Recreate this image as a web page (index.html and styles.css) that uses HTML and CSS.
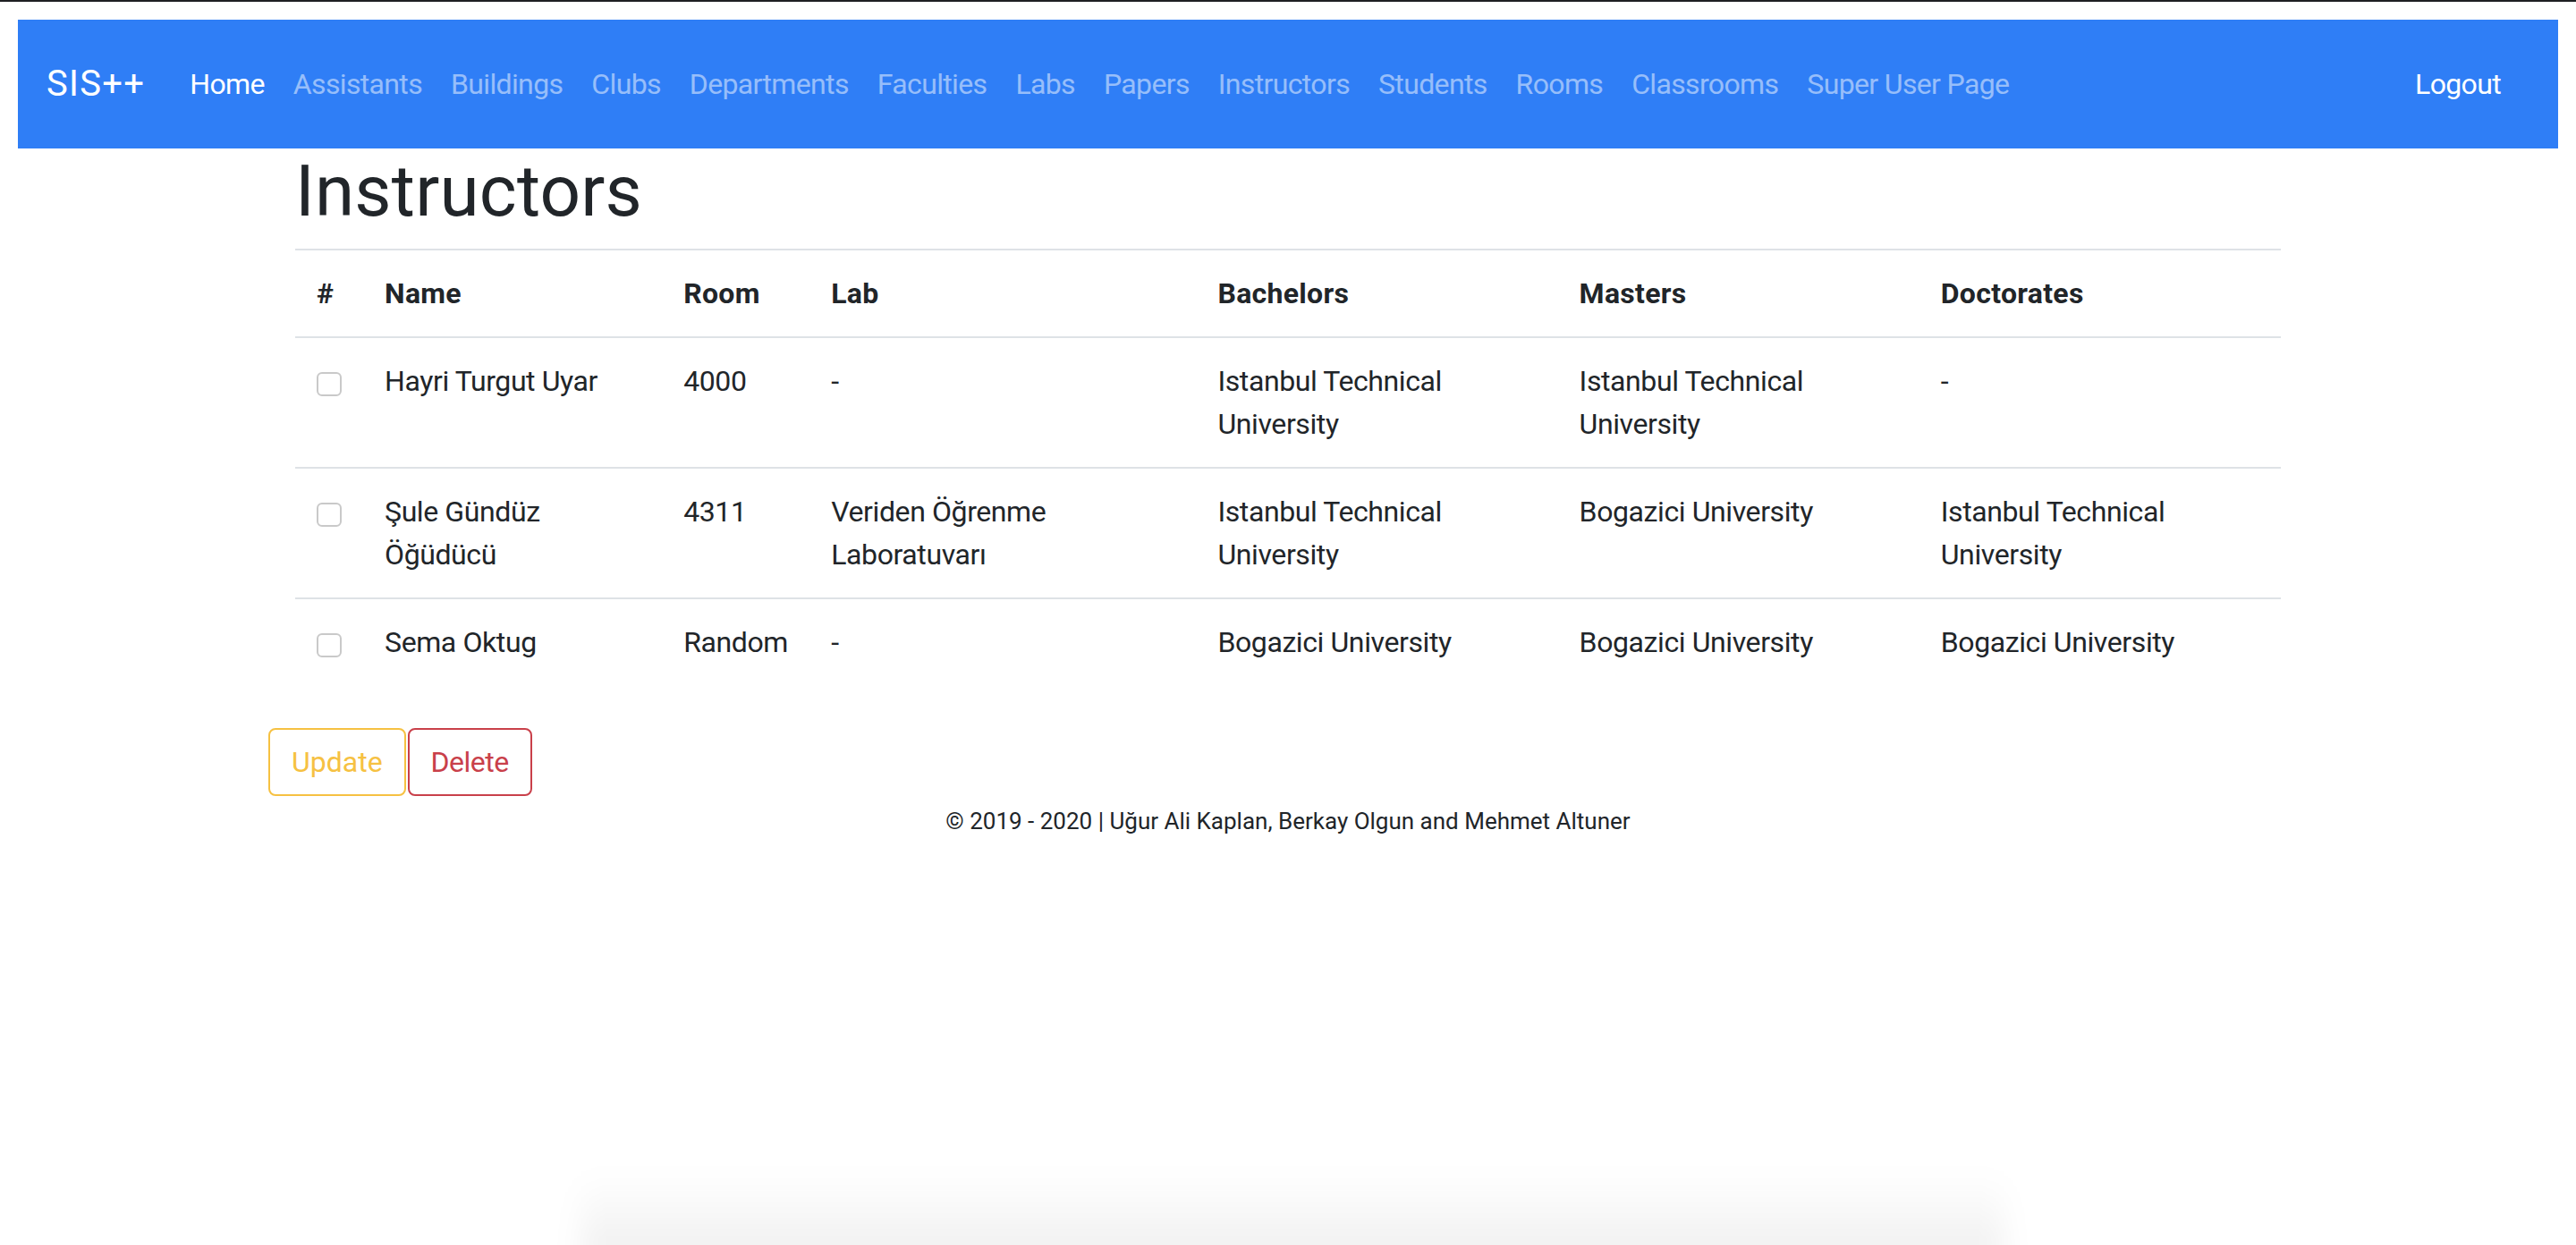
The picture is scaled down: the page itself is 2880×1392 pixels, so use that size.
FILE: index.html
```html
<!DOCTYPE html>
<html lang="en">
<head>
<meta charset="utf-8">
<title>Instructors - SIS++</title>
<link rel="stylesheet" href="styles.css">
</head>
<body>
<div class="window-edge"></div>
<div class="page">
  <nav class="navbar">
    <a class="brand" href="#">SIS++</a>
    <ul class="nav-links">
      <li><a class="nav-link active" href="#">Home</a></li>
      <li><a class="nav-link" href="#">Assistants</a></li>
      <li><a class="nav-link" href="#">Buildings</a></li>
      <li><a class="nav-link" href="#">Clubs</a></li>
      <li><a class="nav-link" href="#">Departments</a></li>
      <li><a class="nav-link" href="#">Faculties</a></li>
      <li><a class="nav-link" href="#">Labs</a></li>
      <li><a class="nav-link" href="#">Papers</a></li>
      <li><a class="nav-link" href="#">Instructors</a></li>
      <li><a class="nav-link" href="#">Students</a></li>
      <li><a class="nav-link" href="#">Rooms</a></li>
      <li><a class="nav-link" href="#">Classrooms</a></li>
      <li><a class="nav-link" href="#">Super User Page</a></li>
    </ul>
    <a class="nav-link logout" href="#">Logout</a>
  </nav>

  <main class="container">
    <h1 class="title">Instructors</h1>
    <table class="table">
      <colgroup>
        <col class="c-check"><col class="c-name"><col class="c-room"><col class="c-lab">
        <col class="c-deg"><col class="c-deg"><col class="c-deg">
      </colgroup>
      <thead>
        <tr>
          <th>#</th><th>Name</th><th>Room</th><th>Lab</th><th>Bachelors</th><th>Masters</th><th>Doctorates</th>
        </tr>
      </thead>
      <tbody>
        <tr>
          <td><input type="checkbox" class="check"></td>
          <td>Hayri Turgut Uyar</td>
          <td>4000</td>
          <td>-</td>
          <td>Istanbul Technical University</td>
          <td>Istanbul Technical University</td>
          <td>-</td>
        </tr>
        <tr>
          <td><input type="checkbox" class="check"></td>
          <td>Şule Gündüz Öğüdücü</td>
          <td>4311</td>
          <td>Veriden Öğrenme Laboratuvarı</td>
          <td>Istanbul Technical University</td>
          <td>Bogazici University</td>
          <td>Istanbul Technical University</td>
        </tr>
        <tr>
          <td><input type="checkbox" class="check"></td>
          <td>Sema Oktug</td>
          <td>Random</td>
          <td>-</td>
          <td>Bogazici University</td>
          <td>Bogazici University</td>
          <td>Bogazici University</td>
        </tr>
      </tbody>
    </table>
    <div class="actions">
      <button class="btn btn-warning">Update</button><button class="btn btn-danger">Delete</button>
    </div>
    <footer class="footer">© 2019 - 2020 | Uğur Ali Kaplan, Berkay Olgun and Mehmet Altuner</footer>
  </main>
</div>
<div class="dock-shadow"></div>
</body>
</html>
```

FILE: styles.css
```css
* { box-sizing: border-box; }

html, body {
  margin: 0;
  padding: 0;
  background: #ffffff;
}

body {
  font-family: Roboto, "Liberation Sans", sans-serif;
  font-size: 32px;
  line-height: 48px;
  color: #212529;
  min-height: 1392px;
}

.window-edge {
  height: 2px;
  background: #1e1f22;
}

.page {
  padding: 20px 20px 0;
}

/* Navbar */
.navbar {
  display: flex;
  align-items: center;
  height: 144px;
  padding: 0 32px;
  background: #2f7ef6;
}

.brand {
  color: #ffffff;
  text-decoration: none;
  font-size: 40px;
  line-height: 60px;
  margin-right: 34px;
  letter-spacing: 1.3px;
}

.nav-links {
  display: flex;
  list-style: none;
  margin: 0;
  padding: 0;
  flex: 1;
}

.nav-link {
  display: block;
  padding: 8px 16px;
  color: rgba(255, 255, 255, 0.5);
  text-decoration: none;
  letter-spacing: -0.65px;
}

.nav-link.active,
.nav-link.logout {
  color: #ffffff;
}

.nav-link.logout {
  padding-right: 32px;
}

/* Content */
.container {
  width: 2220px;
  margin: 0 auto;
}

.title {
  margin: 0 0 16px;
  font-size: 80px;
  line-height: 96px;
  font-weight: 400;
  letter-spacing: 0.2px;
  color: #212529;
}

.table {
  width: 2220px;
  border-collapse: collapse;
  table-layout: fixed;
  margin: 0;
}

.c-check { width: 76px; }
.c-name { width: 334px; }
.c-room { width: 165px; }
.c-lab { width: 432px; }
.c-deg { width: 404px; }

.table th,
.table td {
  padding: 24px;
  text-align: left;
  vertical-align: top;
  letter-spacing: -0.4px;
}

.table th {
  font-weight: 700;
  vertical-align: bottom;
  border-top: 2px solid #dee2e6;
  border-bottom: 2px solid #dee2e6;
  letter-spacing: 0.3px;
}

.table td {
  border-top: 2px solid #dee2e6;
}

.check {
  -webkit-appearance: none;
  appearance: none;
  width: 28px;
  height: 27px;
  margin: 14px 0 0;
  border: 2px solid #c9c9c9;
  border-radius: 6px;
  background: #ffffff;
  display: block;
}

/* Actions */
.actions {
  display: flex;
  gap: 2px;
  margin: 48px 0 0 -30px;
}

.btn {
  font-family: inherit;
  font-size: 32px;
  line-height: 48px;
  padding: 12px 24px;
  border-radius: 8px;
  background: #ffffff;
  border: 2px solid;
  letter-spacing: 0;
}

.btn-warning {
  color: #f6c142;
  border-color: #f6c142;
}

.btn-danger {
  color: #c9404a;
  border-color: #c9404a;
  letter-spacing: -0.5px;
}

.footer {
  text-align: center;
  font-size: 26px;
  line-height: 40px;
  margin-top: 8px;
  letter-spacing: 0;
}

.dock-shadow {
  position: fixed;
  left: 650px;
  bottom: -20px;
  width: 1590px;
  height: 100px;
  background: linear-gradient(to bottom, rgba(0, 0, 0, 0), rgba(0, 0, 0, 0.065));
  filter: blur(16px);
  pointer-events: none;
}
```
